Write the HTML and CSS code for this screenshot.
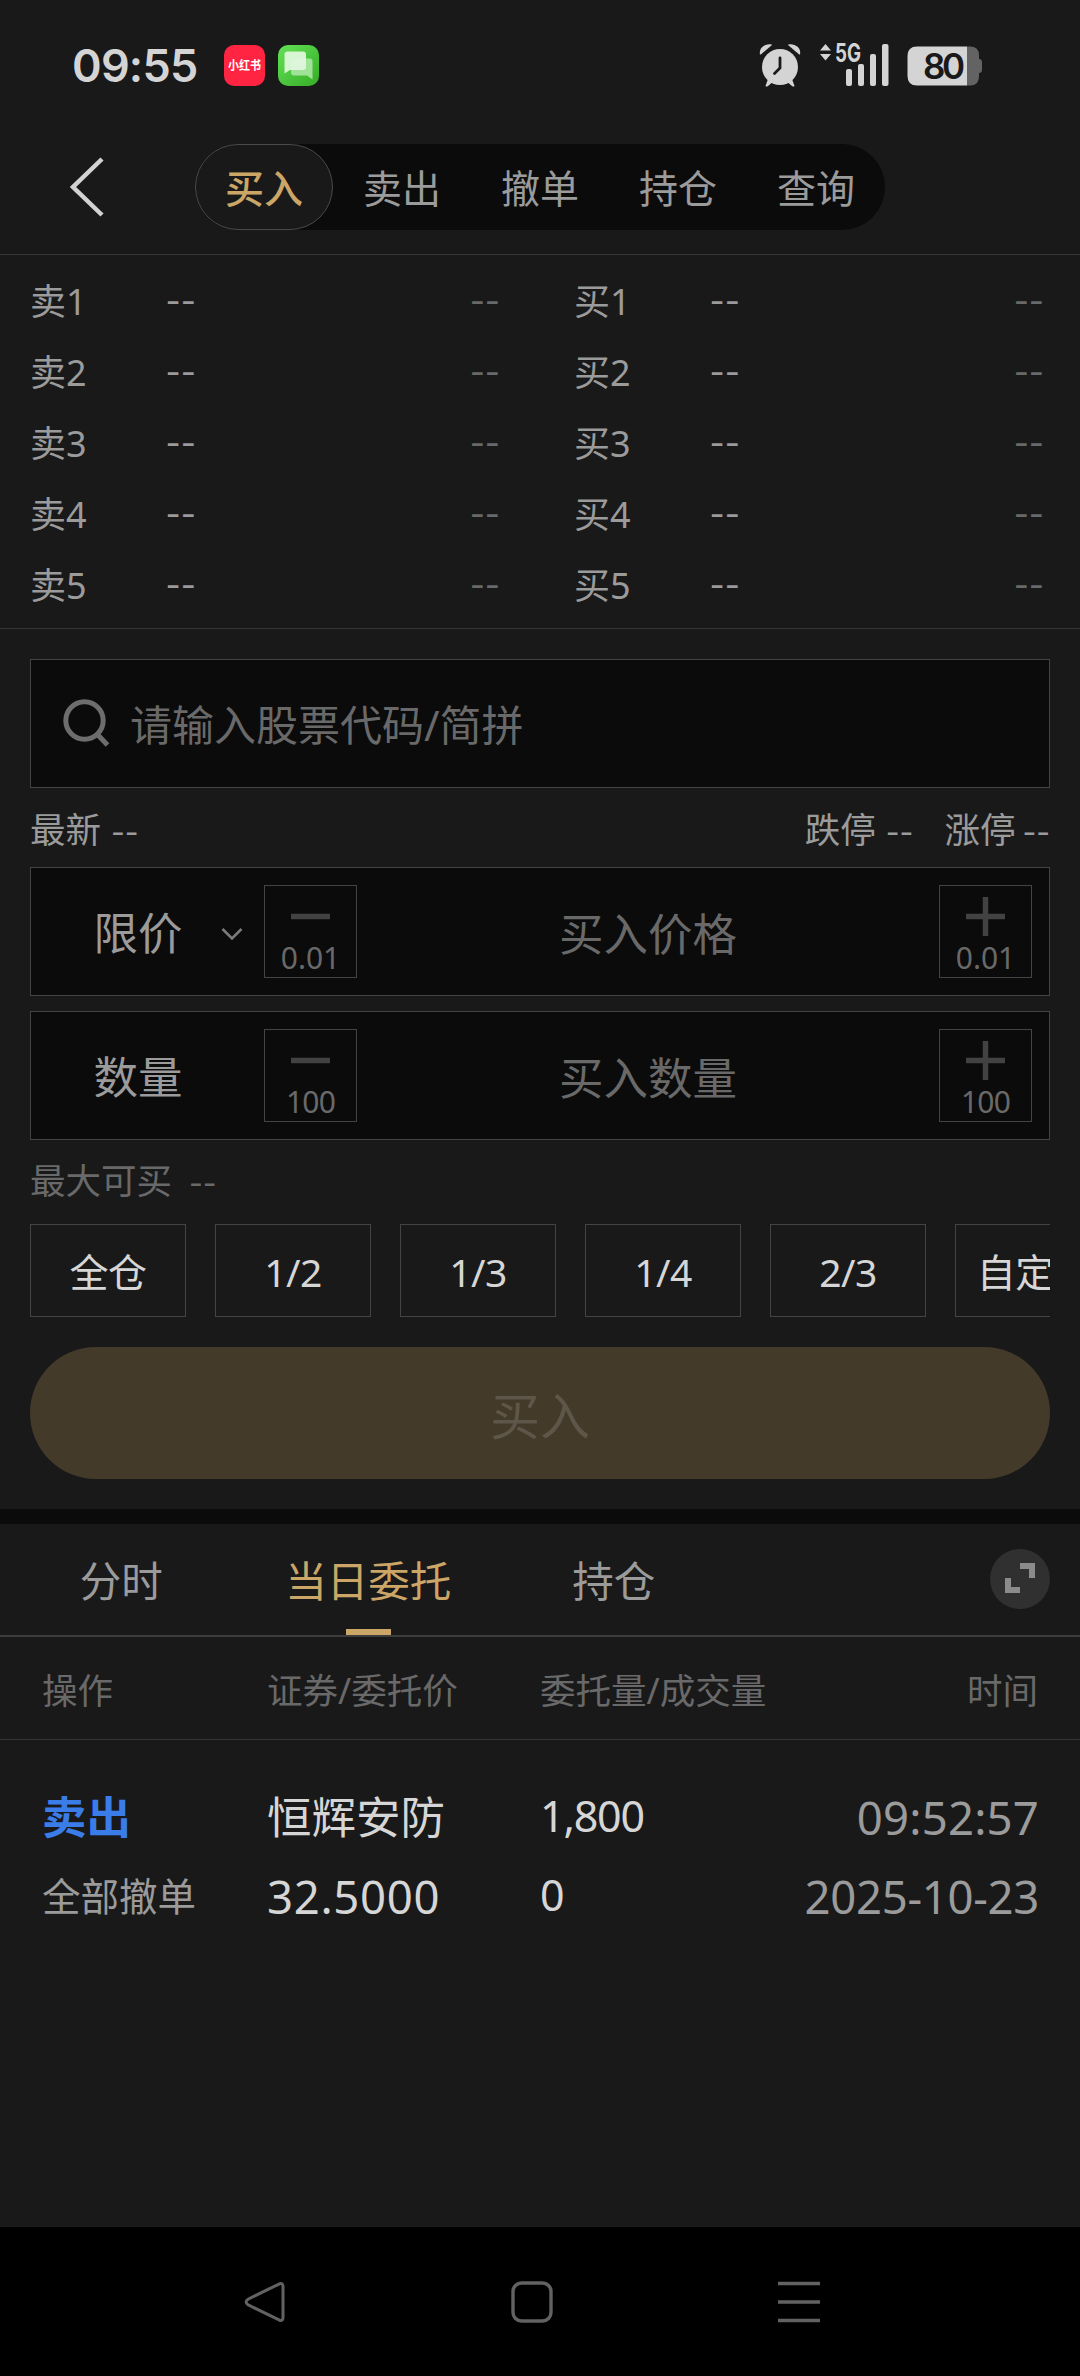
FILE: index.html
```html
<!DOCTYPE html>
<html lang="zh-CN">
<head>
<meta charset="utf-8">
<title>买入</title>
<link rel="stylesheet" href="styles.css">
</head>
<body>
<div class="screen">
  <header class="status">
    <span class="clock">09:55</span>
    <svg class="app-icon" viewBox="0 0 41 41">
      <rect width="41" height="41" rx="10" fill="#ff2442"/>
      <text x="4" y="25.2" class="app-name" textLength="33" lengthAdjust="spacingAndGlyphs">小红书</text>
    </svg>
    <svg class="app-icon" viewBox="0 0 41 41">
      <defs><linearGradient id="g" x1="0" y1="0" x2="1" y2="1"><stop offset="0" stop-color="#63e256"/><stop offset="1" stop-color="#36ac27"/></linearGradient></defs>
      <rect width="41" height="41" rx="10" fill="url(#g)"/>
      <path d="M16 13.5h15.500q3 0 3 3V34.500l-5.500-4H16q-3 0-3-3V16.500q0-3 3-3z" fill="#a0e398"/>
      <path d="M9.500 6.500H25q3 0 3 3v12.500q0 3-3 3H12L6.500 28.500V9.500q0-3 3-3z" fill="#e2f8df" fill-opacity=".93"/>
    </svg>
    <div class="status-right">
      <svg class="alarm" viewBox="0 0 42 44">
        <g fill="#d4d4d4">
          <path d="M1 11.500C-.5 5 6 .500 12.500 1.500L13 2 1.800 11.600z"/>
          <path d="M41 11.500C42.500 5 36 .500 29.500 1.500L29 2 40.200 11.600z"/>
          <circle cx="21" cy="24" r="18"/>
          <path d="M9 36l-2.500 7q1 1 2.500 0l6-5zM33 36l2.500 7q-1 1-2.500 0l-6-5z"/>
        </g>
        <path d="M21 15v10l-5.500 5.500" fill="none" stroke="#19191a" stroke-width="2.800" stroke-linecap="round"/>
      </svg>
      <svg class="signal" viewBox="0 0 71 44">
        <g fill="#d4d4d4">
          <path d="M1 7.500L6.500 1 12 7.500zM1 11h11L6.500 17.500z"/>
          <rect x="27" y="26" width="6" height="17" rx="2"/>
          <rect x="39" y="21" width="6" height="22" rx="2"/>
          <rect x="51" y="11" width="6" height="32" rx="2"/>
          <rect x="63" y="1" width="6.500" height="42" rx="2"/>
        </g>
        <text x="16" y="18.800" class="net" textLength="26" lengthAdjust="spacingAndGlyphs">5G</text>
      </svg>
      <svg class="battery" viewBox="0 0 76 40">
        <path d="M60 .500h3q9 0 9 9v3.500q3 0 3 3v8q0 3-3 3v3.500q0 9-9 9h-3z" fill="#636364"/>
        <path d="M10 .500H60v39H10q-9.500 0-9.500-9.500V10Q.500.500 10 .500z" fill="#d4d4d4"/>
        <text x="16" y="32.500" class="level" textLength="42">80</text>
      </svg>
    </div>
  </header>

  <nav class="topbar">
    <svg class="back" viewBox="0 0 34 60"><path d="M32 2L3 30l29 28" fill="none" stroke="#d2d2d2" stroke-width="4.500"/></svg>
    <div class="segments">
      <a class="segment on">买入</a><a class="segment">卖出</a><a class="segment">撤单</a><a class="segment">持仓</a><a class="segment">查询</a>
    </div>
  </nav>

  <section class="quotes">
    <div class="side">
      <div class="level-row"><span>卖1</span><i class="dash">--</i><i class="dash dim">--</i></div>
      <div class="level-row"><span>卖2</span><i class="dash">--</i><i class="dash dim">--</i></div>
      <div class="level-row"><span>卖3</span><i class="dash">--</i><i class="dash dim">--</i></div>
      <div class="level-row"><span>卖4</span><i class="dash">--</i><i class="dash dim">--</i></div>
      <div class="level-row"><span>卖5</span><i class="dash">--</i><i class="dash dim">--</i></div>
    </div>
    <div class="side">
      <div class="level-row"><span>买1</span><i class="dash">--</i><i class="dash dim">--</i></div>
      <div class="level-row"><span>买2</span><i class="dash">--</i><i class="dash dim">--</i></div>
      <div class="level-row"><span>买3</span><i class="dash">--</i><i class="dash dim">--</i></div>
      <div class="level-row"><span>买4</span><i class="dash">--</i><i class="dash dim">--</i></div>
      <div class="level-row"><span>买5</span><i class="dash">--</i><i class="dash dim">--</i></div>
    </div>
  </section>

  <main class="order">
    <div class="search">
      <svg class="glass" viewBox="0 0 48 50"><circle cx="22.500" cy="22.500" r="18.700" fill="none" stroke="#6d6d6e" stroke-width="5"/><path d="M35 36l10.500 11" stroke="#6d6d6e" stroke-width="5"/></svg>
      <span>请输入股票代码/简拼</span>
    </div>
    <div class="limits">
      <span>最新<i class="dash">--</i></span>
      <span class="down">跌停<i class="dash">--</i></span>
      <span class="up">涨停<i class="dash">--</i></span>
    </div>
    <div class="field">
      <div class="field-label"><span>限价</span><svg class="chevron" viewBox="0 0 22 14"><path d="M1.500 2L11 11.500 20.500 2" fill="none" stroke="#7a7a7a" stroke-width="2.600"/></svg></div>
      <div class="step"><svg class="sign" viewBox="0 0 39 39"><path d="M0 19.500h39" stroke="#424242" stroke-width="5.500"/></svg><span>0.01</span></div>
      <div class="hint">买入价格</div>
      <div class="step"><svg class="sign" viewBox="0 0 39 39"><path d="M0 19.500h39M19.500 0v39" stroke="#424242" stroke-width="5.500"/></svg><span>0.01</span></div>
    </div>
    <div class="field">
      <div class="field-label"><span>数量</span></div>
      <div class="step"><svg class="sign" viewBox="0 0 39 39"><path d="M0 19.500h39" stroke="#424242" stroke-width="5.500"/></svg><span class="lot">100</span></div>
      <div class="hint">买入数量</div>
      <div class="step"><svg class="sign" viewBox="0 0 39 39"><path d="M0 19.500h39M19.500 0v39" stroke="#424242" stroke-width="5.500"/></svg><span class="lot">100</span></div>
    </div>
    <div class="max">最大可买<i class="dash">--</i></div>
    <div class="portions">
      <div class="portion">全仓</div><div class="portion">1/2</div><div class="portion">1/3</div><div class="portion">1/4</div><div class="portion">2/3</div><div class="portion custom">自定义</div>
    </div>
    <div class="submit">买入</div>
  </main>

  <section class="records">
    <div class="tabs">
      <a class="tab">分时</a><a class="tab on">当日委托</a><a class="tab">持仓</a>
      <svg class="expand" viewBox="0 0 60 60"><circle cx="30" cy="30" r="30" fill="#303031"/><path d="M30 17h12v12M18 29v12h12" fill="none" stroke="#8b8b8b" stroke-width="6"/></svg>
    </div>
    <div class="grid head"><span>操作</span><span>证券/委托价</span><span>委托量/成交量</span><span class="end">时间</span></div>
    <div class="grid entry">
      <div><b class="sell">卖出</b><span class="state">全部撤单</span></div>
      <div><span>恒辉安防</span><span class="price">32.5000</span></div>
      <div class="qty"><span>1,800</span><span>0</span></div>
      <div class="end when"><span class="time">09:52:57</span><span class="date">2025-10-23</span></div>
    </div>
  </section>

  <footer class="navbar">
    <svg class="key" viewBox="0 0 42 42"><path d="M35.500 2.800L4 18.200q-3.800 2.800 0 5.600L35.500 39.200q3.500 1 3.500-2.700V5.500q0-3.700-3.500-2.700z" fill="none" stroke="#626262" stroke-width="3"/></svg>
    <svg class="key" viewBox="0 0 42 42"><rect x="2" y="2" width="38" height="38" rx="8.500" fill="none" stroke="#626262" stroke-width="3.400"/></svg>
    <svg class="key" viewBox="0 0 42 42"><path d="M0 2.500h42M0 21h42M0 39.500h42" stroke="#626262" stroke-width="3.600"/></svg>
  </footer>
</div>
</body>
</html>
```

FILE: styles.css
```css
* { box-sizing: border-box; }
body { margin: 0; background: #19191a; }
svg { display: block; flex: none; overflow: visible; }

.screen {
  width: 1080px;
  height: 2376px;
  display: flex;
  flex-direction: column;
  overflow: hidden;
  font-family: "Noto Sans", "Noto Sans CJK SC", sans-serif;
  font-size: 36px;
  line-height: 1;
  color: #9b9b9b;
  white-space: nowrap;
}

/* status bar */
.status {
  height: 130px;
  display: flex;
  align-items: center;
  padding-left: 72px;
}
.clock {
  width: 152px;
  font: 600 45px/1 Inter, sans-serif;
  letter-spacing: -0.8px;
  color: #d4d4d4;
}
.app-icon { width: 41px; height: 41px; margin-right: 13px; }
.app-name { font: 700 12.5px "Noto Sans CJK SC", sans-serif; fill: #fff; }
.status-right {
  display: flex;
  align-items: center;
  margin-left: auto;
  padding-right: 97px;
}
.alarm { width: 42px; height: 44px; margin-right: 18px; }
.signal { width: 71px; height: 44px; margin-right: 17px; }
.net { font: 700 25px Inter, sans-serif; fill: #d4d4d4; }
.battery { width: 76px; height: 40px; margin-top: 1px; }
.level { font: 600 35px Inter, sans-serif; fill: #19191a; }

/* top bar */
.topbar {
  height: 125px;
  display: flex;
  align-items: flex-start;
  padding: 14px 0 0 70px;
  border-bottom: 1px solid #363637;
}
.back { width: 34px; height: 60px; margin: 13px 91px 0 0; }
.segments {
  display: flex;
  height: 86px;
  border-radius: 43px;
  background: #0b0b0b;
}
.segment {
  width: 138px;
  height: 86px;
  border-radius: 43px;
  font-size: 39px;
  line-height: 88px;
  text-align: center;
}
.segment.on {
  border: 1px solid #4a4a4a;
  background: #19191a;
  color: #cba667;
  font-weight: 500;
  line-height: 86px;
}

/* quotes */
.dash {
  font: normal 400 33px/1 Inter, sans-serif;
}
.dim { color: #69696a; }
.quotes {
  height: 374px;
  display: grid;
  grid-template-columns: 470px 470px;
  column-gap: 74px;
  padding: 11px 0 0 30px;
  border-bottom: 1px solid #363637;
}
.level-row {
  height: 71px;
  display: grid;
  grid-template-columns: 135.5px 1fr auto;
  align-items: center;
}

/* order form */
.order {
  height: 895px;
  display: flex;
  flex-direction: column;
  padding: 30px 30px 0;
  border-bottom: 15px solid #0b0b0b;
}
.search, .field {
  height: 129px;
  display: flex;
  align-items: center;
  border: 1px solid #444445;
  background: #0b0b0b;
}
.search { padding-left: 31px; font-size: 42px; color: #69696a; }
.search span { padding-top: 3px; }
.glass { width: 48px; height: 50px; margin: -2px 20px 0 0; }
.limits {
  height: 79px;
  display: flex;
  align-items: center;
  padding-top: 5px;
  font-size: 35.5px;
}
.limits .dash, .max .dash { font-size: 30px; margin-left: 10px; }
.down { margin-left: auto; }
.up { margin-left: 31px; }
.limits .up .dash { margin-left: 7px; }
.field { padding-right: 17px; }
.field + .field { margin-top: 15px; }
.field-label {
  width: 233px;
  display: flex;
  align-items: center;
  padding: 4px 0 0 62.5px;
  font-size: 44.5px;
}
.chevron { width: 22px; height: 14px; margin-left: 38px; }
.step {
  width: 93px;
  height: 93px;
  display: flex;
  flex-direction: column;
  align-items: center;
  padding-top: 11px;
  border: 1px solid #444445;
  font-size: 30px;
  color: #69696a;
}
.step span { margin-top: 7px; }
.step .lot { letter-spacing: -0.8px; }
.sign { width: 39px; height: 39px; }
.hint {
  flex: 1;
  padding-top: 5px;
  font-size: 44.5px;
  text-align: center;
  color: #69696a;
}
.max {
  height: 84px;
  padding-top: 23px;
  font-size: 35.5px;
  color: #69696a;
}
.max .dash { margin-left: 17px; }
.portions {
  display: flex;
  gap: 29px;
  overflow: hidden;
}
.portion {
  flex: none;
  width: 156px;
  height: 93px;
  padding-top: 2px;
  border: 1px solid #444445;
  font-size: 39px;
  line-height: 90px;
  letter-spacing: -0.5px;
  text-align: center;
  color: #d6d6d6;
}
.custom { padding-left: 3px; }
.submit {
  height: 132px;
  margin-top: 30px;
  padding-top: 4px;
  border-radius: 66px;
  background: #443a2a;
  font-size: 50px;
  line-height: 130px;
  text-align: center;
  color: #5f564a;
}

/* records */
.records { flex: 1; }
.tabs {
  height: 113px;
  display: flex;
  padding-right: 30px;
  border-bottom: 2px solid #3d3d3e;
}
.tab {
  width: 245.5px;
  display: flex;
  flex-direction: column;
  align-items: center;
  font-size: 41.5px;
  line-height: 115px;
}
.tab:first-child { padding-right: 3px; }
.tab.on { color: #cba667; }
.tab.on::after {
  content: "";
  width: 45px;
  height: 6px;
  margin-top: -10px;
  background: #cba667;
}
.expand { width: 60px; height: 60px; margin: 25px 0 0 auto; }
.grid {
  display: grid;
  grid-template-columns: 225px 273px 1fr auto;
  padding: 0 42px;
}
.head {
  height: 103px;
  border-bottom: 1px solid #363637;
  font-size: 35.5px;
  line-height: 106px;
  color: #69696a;
}
.entry { padding: 55px 41px 0 42px; font-size: 44.5px; color: #d6d6d6; }
.entry span, .entry b { display: block; height: 44px; line-height: 44px; }
.entry div > :first-child { margin-bottom: 35px; }
.sell { color: #3a7de9; font-weight: 700; }
.state { font-size: 38.5px; color: #9b9b9b; }
.entry .price, .entry .when { font-size: 45.5px; }
.entry .price { letter-spacing: 0.7px; }
.entry .qty { font-size: 43px; letter-spacing: -1.2px; margin-top: -1px; }
.end { text-align: right; }
.entry .when { color: #9b9b9b; }
.entry .time { letter-spacing: 0.2px; }
.entry .date { letter-spacing: -0.3px; }

/* system navigation */
.navbar {
  height: 149px;
  display: flex;
  justify-content: center;
  gap: 225px;
  padding: 54px 17px 0 0;
  background: #000;
}
.key { width: 42px; height: 42px; }
```
